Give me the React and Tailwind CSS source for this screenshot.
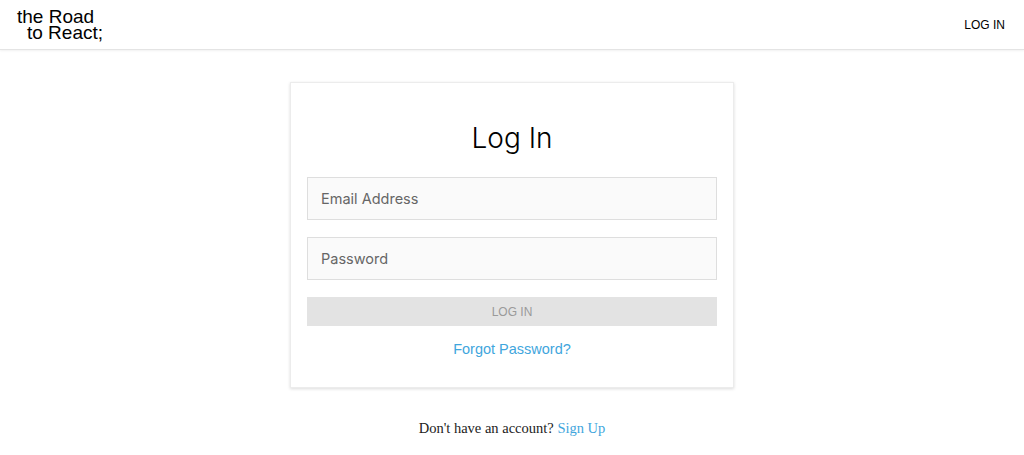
import React from 'react';

const LoginPage = () => {
    return (
        <div className="min-h-screen bg-white">
            <header className="h-[50px] flex items-center justify-between pl-[17px] pr-[19px] border-b border-[#e4e4e4] shadow-[0_1px_2px_rgba(0,0,0,0.06)] font-['Liberation_Sans',sans-serif]">
                <div className="text-[19px] leading-[16px] text-black">
                    <div>the Road</div>
                    <div className="pl-[10px]">to React;</div>
                </div>
                <a className="text-[12px] text-black">LOG IN</a>
            </header>

            <main className="flex flex-col items-center pt-[32px]">
                <div className="w-[444px] h-[306px] border border-[#ececec] bg-white shadow-[0_1px_3px_rgba(0,0,0,0.14)] px-[16px] pt-[36px] flex flex-col font-['Inter',sans-serif]">
                    <h1 className="text-center text-[28px] font-light leading-[38px] text-black">Log In</h1>
                    <input
                        className="mt-[20px] h-[43px] w-full border border-[#dedede] bg-[#fafafa] px-[13px] text-[14.5px] placeholder:text-[#666]"
                        placeholder="Email Address"
                    />
                    <input
                        type="password"
                        className="mt-[17px] h-[43px] w-full border border-[#dedede] bg-[#fafafa] px-[13px] text-[14.5px] placeholder:text-[#666]"
                        placeholder="Password"
                    />
                    <button className="mt-[17px] h-[29px] w-full bg-[#e3e3e3] text-[12px] text-[#9a9a9a] font-['Liberation_Sans',sans-serif]">
                        LOG IN
                    </button>
                    <a className="mt-[13px] text-center text-[14.5px] text-[#3fa6dd] font-['Liberation_Sans',sans-serif]">Forgot Password?</a>
                </div>
                <p className="mt-[30px] text-[14.5px] text-[#222] font-['Liberation_Serif',serif]">
                    Don't have an account? <a className="text-[#3fa6dd]">Sign Up</a>
                </p>
            </main>
        </div>
    );
};

export default LoginPage;
